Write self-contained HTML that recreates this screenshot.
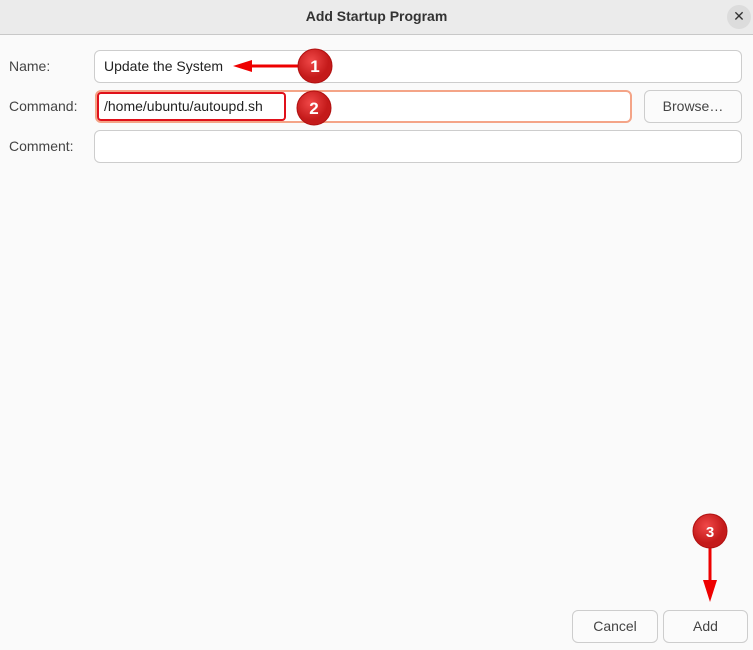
<!DOCTYPE html>
<html><head><style>
body{margin:0;width:753px;height:650px;background:#fafafa;font-family:"Liberation Sans",sans-serif;font-size:14px;color:#333;position:relative;overflow:hidden}
.tb{position:absolute;left:0;top:0;width:753px;height:34px;background:#ebebeb;border-bottom:1px solid #c8c8c8}
.tb .t{position:absolute;left:0;right:0;top:8px;text-align:center;font-weight:bold;font-size:14px;color:#333}
.x{position:absolute;left:727px;top:5px;width:24px;height:24px;border-radius:50%;background:#dcdcdc;text-align:center;line-height:23px;font-size:14px;color:#333}
.l{position:absolute;left:9px;color:#444}
.e{position:absolute;background:#fff;border:1px solid #cdcdcd;border-radius:6px;box-sizing:border-box}
.b{position:absolute;background:#fbfbfb;border:1px solid #cdcdcd;border-radius:6px;box-sizing:border-box;text-align:center;color:#444;line-height:30px}
.tx{position:absolute;color:#222}
</style></head><body>
<div class="tb"><div class="t">Add Startup Program</div><div class="x">✕</div></div>
<div class="l" style="top:58px">Name:</div>
<div class="l" style="top:98px">Command:</div>
<div class="l" style="top:138px">Comment:</div>
<div class="e" style="left:94px;top:50px;width:648px;height:33px"></div>
<div class="e" style="left:95px;top:90px;width:537px;height:33px;border:2px solid #f4a487"></div>
<div class="b" style="left:644px;top:90px;width:98px;height:33px">Browse…</div>
<div class="e" style="left:94px;top:130px;width:648px;height:33px"></div>
<div class="tx" style="left:104px;top:58px">Update the System</div>
<div class="tx" style="left:104px;top:98px">/home/ubuntu/autoupd.sh</div>
<div style="position:absolute;left:97px;top:92px;width:189px;height:29px;border:2px solid #e0101a;border-radius:4px;box-sizing:border-box"></div>
<div class="b" style="left:572px;top:610px;width:86px;height:33px">Cancel</div>
<div class="b" style="left:663px;top:610px;width:85px;height:33px">Add</div>
<svg width="753" height="650" style="position:absolute;left:0;top:0">
<defs><radialGradient id="g" cx="40%" cy="35%"><stop offset="0" stop-color="#f04848"/><stop offset="1" stop-color="#c41a1a"/></radialGradient></defs>
<line x1="300" y1="66" x2="245" y2="66" stroke="#e00" stroke-width="3"/>
<polygon points="233,66 252,60 252,72" fill="#e00"/>
<line x1="710" y1="545" x2="710" y2="585" stroke="#e00" stroke-width="3"/>
<polygon points="710,602 703,580 717,580" fill="#e00"/>
<g font-family="Liberation Sans" font-weight="bold" font-size="17" fill="#fff" text-anchor="middle">
<circle cx="315" cy="66" r="17" fill="url(#g)" stroke="#b01010"/><text x="315" y="72">1</text>
<circle cx="314" cy="108" r="17" fill="url(#g)" stroke="#b01010"/><text x="314" y="114">2</text>
<circle cx="710" cy="531" r="17" fill="url(#g)" stroke="#b01010"/><text x="710" y="537" font-size="15">3</text>
</g></svg>
</body></html>
